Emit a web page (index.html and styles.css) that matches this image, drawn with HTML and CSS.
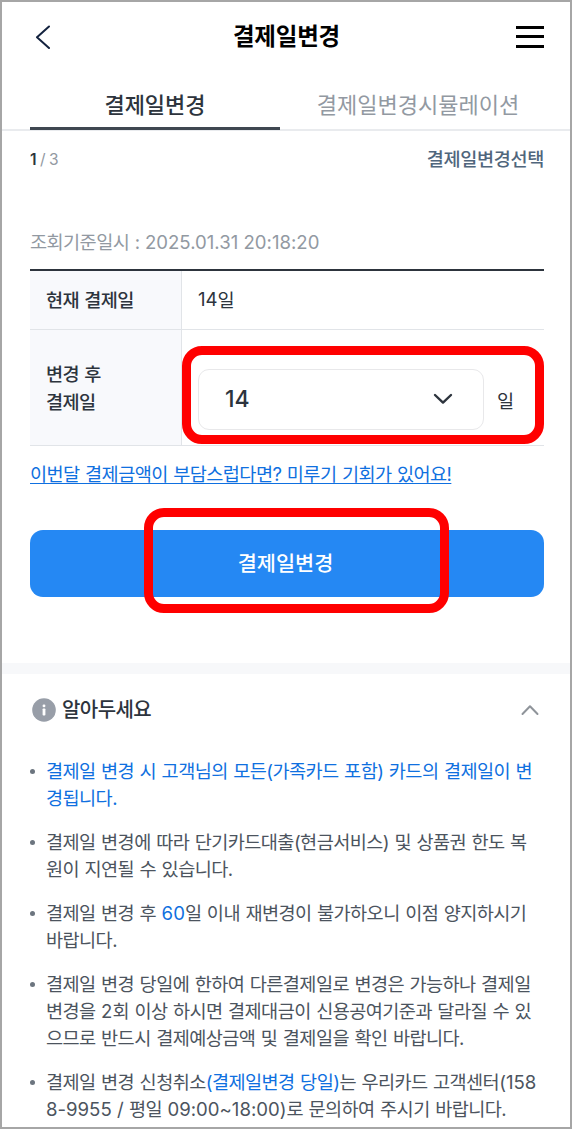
FILE: index.html
```
<!DOCTYPE html>
<html lang="ko">
  <head>
    <meta charset="UTF-8">
    <meta name="viewport" content="width=device-width, initial-scale=1.0">
    <title>결제일변경</title>
    <link rel="stylesheet" href="styles.css">
  </head>
  <body>
    <div id="app">
      <header id="top-bar">
        <a href="#" class="back" aria-label="뒤로">
          <svg width="16" height="24" viewBox="0 0 16 24"><path d="M14 1.5 L2 12.3 L14 23" /></svg>
        </a>
        <h1>결제일변경</h1>
        <a href="#" class="menu" aria-label="메뉴">
          <span></span>
          <span></span>
          <span></span>
        </a>
      </header>

      <nav id="tabs">
        <a href="#" class="tab active">결제일변경</a>
        <a href="#" class="tab">결제일변경시뮬레이션</a>
      </nav>

      <main>
        <div class="step">
          <p class="step-count"><b>1</b><span>/</span><span>3</span></p>
          <p class="step-name">결제일변경선택</p>
        </div>

        <p class="base-time">조회기준일시 : <span class="num">2025.01.31 20:18:20</span></p>

        <div class="pay-table">
          <div class="row row-now">
            <div class="label">현재 결제일</div>
            <div class="value"><span class="num">14</span>일</div>
          </div>
          <div class="row row-after">
            <div class="label">변경 후<br>결제일</div>
            <div class="value">
              <button type="button" class="day-select">
                <span class="num">14</span>
                <svg width="20" height="12" viewBox="0 0 20 12"><path d="M2 2 L10 9.6 L18 2" /></svg>
              </button>
              <span class="unit">일</span>
              <i class="mark mark-select"></i>
            </div>
          </div>
        </div>

        <a href="#" class="delay-link">이번달 결제금액이 부담스럽다면? 미루기 기회가 있어요!</a>

        <div class="submit-wrap">
          <button type="button" class="submit">결제일변경</button>
          <i class="mark mark-submit"></i>
        </div>
      </main>

      <section id="notice">
        <div class="notice-head">
          <svg class="info" width="24" height="24" viewBox="0 0 24 24">
            <circle cx="12" cy="12" r="11.8" />
            <rect x="10.6" y="6.6" width="2.8" height="2.6" rx="1.2" />
            <rect x="10.6" y="10.4" width="2.8" height="7.2" rx="0.8" />
          </svg>
          <h2>알아두세요</h2>
          <svg class="fold" width="18" height="12" viewBox="0 0 18 12"><path d="M1.5 10 L9 2.2 L16.5 10" /></svg>
        </div>
        <ul>
          <li><em>결제일 변경 시 고객님의 모든(가족카드 포함) 카드의 결제일이 변<br>경됩니다.</em></li>
          <li>결제일 변경에 따라 단기카드대출(현금서비스) 및 상품권 한도 복<br>원이 지연될 수 있습니다.</li>
          <li>결제일 변경 후 <em class="num">60</em>일 이내 재변경이 불가하오니 이점 양지하시기<br>바랍니다.</li>
          <li>결제일 변경 당일에 한하여 다른결제일로 변경은 가능하나 결제일<br>변경을 <span class="num">2</span>회 이상 하시면 결제대금이 신용공여기준과 달라질 수 있<br>으므로 반드시 결제예상금액 및 결제일을 확인 바랍니다.</li>
          <li>결제일 변경 신청취소<em>(결제일변경 당일)</em>는 우리카드 고객센터<span class="num">(158<br>8-9955 / </span>평일 <span class="num">09:00~18:00)</span>로 문의하여 주시기 바랍니다.</li>
        </ul>
      </section>
    </div>
  </body>
</html>
```
FILE: styles.css
```
* {
  box-sizing: border-box;
}

body {
  margin: 0;
  font-family: Inter, "Noto Sans CJK KR", sans-serif;
  font-size: 18.6px;
  letter-spacing: -0.57px;
  word-spacing: 0.8px;
  color: #2d343d;
  background-color: #ffffff;
}

h1, h2, p, ul {
  margin: 0;
  padding: 0;
}

a {
  color: inherit;
  text-decoration: none;
}

button {
  font-family: inherit;
  letter-spacing: inherit;
  cursor: pointer;
}

svg {
  display: block;
  fill: none;
  stroke-linecap: round;
  stroke-linejoin: round;
}

#app {
  height: 1129px;
  border: 2px solid #a6a6a6;
  overflow: hidden;
  white-space: nowrap;
}

.num {
  letter-spacing: 0;
  word-spacing: 0;
}

/* header */
#top-bar {
  display: flex;
  align-items: center;
  justify-content: space-between;
  height: 69px;
  padding: 0 26px 0 33px;
}

#top-bar h1 {
  font-size: 23.5px;
  line-height: 30px;
  font-weight: 700;
  letter-spacing: -0.2px;
  color: #000;
}

.back {
  width: 22px;
}

.back path {
  stroke: #14233f;
  stroke-width: 2;
}

.menu {
  display: flex;
  flex-direction: column;
  gap: 6.5px;
  width: 28px;
}

.menu span {
  height: 3px;
  background-color: #000;
}

/* tabs */
#tabs {
  display: grid;
  grid-template-columns: 1fr 1fr;
  gap: 13px;
  height: 60px;
  padding: 0 27px 0 28px;
  border-bottom: 2px solid #e9ebee;
}

.tab {
  height: 59px;
  padding-top: 17px;
  font-size: 22px;
  line-height: 34px;
  letter-spacing: 0;
  text-align: center;
  color: #9299a2;
}

.tab.active {
  font-weight: 500;
  color: #2d343d;
  border-bottom: 3px solid #3f4751;
}

main {
  height: 532px;
  padding: 0 26px 0 28px;
}

.step {
  display: flex;
  justify-content: space-between;
  padding-top: 16px;
  line-height: 24px;
}

.step-count {
  display: flex;
  gap: 4px;
  font-size: 15.5px;
  line-height: 25px;
  color: #9299a2;
}

.step-count b {
  font-weight: 600;
}

.step-count b {
  color: #2d343d;
}

.step-name {
  font-size: 18.6px;
  font-weight: 500;
  letter-spacing: -0.35px;
  color: #50667c;
}

.base-time {
  margin-top: 57px;
  line-height: 26px;
  color: #9299a2;
}

/* payment day table */
.pay-table {
  margin-top: 14px;
  border-top: 2px solid #2d343d;
}

.row {
  display: flex;
  border-bottom: 1px solid #e1e4e8;
}

.row-now {
  height: 59px;
}

.row-after {
  height: 116px;
}

.label {
  display: flex;
  align-items: center;
  width: 152px;
  padding-left: 16px;
  line-height: 28px;
  font-weight: 500;
  background-color: #f8f9fc;
  border-right: 1px solid #e1e4e8;
}

.value {
  position: relative;
  display: flex;
  flex: 1;
  align-items: center;
  padding-left: 16px;
}

.row-now .value {
  padding-bottom: 3px;
}

.row-after .value {
  padding-top: 23px;
}

.day-select {
  display: flex;
  align-items: center;
  justify-content: space-between;
  width: 286px;
  height: 61px;
  padding: 0 30px 0 26px;
  font-size: 23px;
  font-weight: 500;
  color: #2d343d;
  background-color: #fff;
  border: 1px solid #e8e8ea;
  border-radius: 11px;
}

.day-select path {
  stroke: #2d343d;
  stroke-width: 2.4;
}

.unit {
  margin-left: 13px;
}

/* red highlight boxes */
.mark {
  position: absolute;
  border: 9px solid #ff0000;
  border-radius: 20px;
  pointer-events: none;
}

.mark-select {
  top: 16px;
  left: 0;
  right: 0;
  height: 98px;
}

.mark-submit {
  top: -22px;
  left: 114px;
  width: 305px;
  height: 105px;
}

.delay-link {
  display: block;
  width: max-content;
  margin-top: 15px;
  line-height: 26px;
  color: #0f70e0;
  text-decoration: underline;
  text-decoration-thickness: 1px;
  text-decoration-skip-ink: none;
  text-underline-offset: 2px;
}

.submit-wrap {
  position: relative;
  margin-top: 43px;
}

.submit {
  display: block;
  width: 100%;
  height: 67px;
  padding: 0 3px 3px 0;
  font-size: 20.8px;
  font-weight: 500;
  letter-spacing: 0;
  color: #fff;
  background-color: #2588f3;
  border: none;
  border-radius: 13px;
}

/* notice */
#notice {
  padding: 20px 26px 0 28px;
  border-top: 11px solid #f7f8fa;
}

.notice-head {
  display: flex;
  align-items: center;
  height: 32px;
  padding: 0 5px 0 2px;
}

.notice-head h2 {
  flex: 1;
  margin-left: 6px;
  font-size: 20px;
  line-height: 30px;
  font-weight: 500;
}

.info circle {
  fill: #989ea8;
}

.info rect {
  fill: #fff;
}

.fold path {
  stroke: #8f949a;
  stroke-width: 2;
}

#notice ul {
  display: flex;
  flex-direction: column;
  gap: 17.5px;
  margin-top: 32px;
  list-style: none;
}

#notice li {
  position: relative;
  padding-left: 16px;
  line-height: 26.75px;
  color: #4c545e;
}

#notice li::before {
  content: "";
  position: absolute;
  top: 11px;
  left: 0;
  width: 5px;
  height: 5px;
  border-radius: 50%;
  background-color: #6c757f;
}

#notice em {
  font-style: normal;
  color: #0f70e0;
}
```
